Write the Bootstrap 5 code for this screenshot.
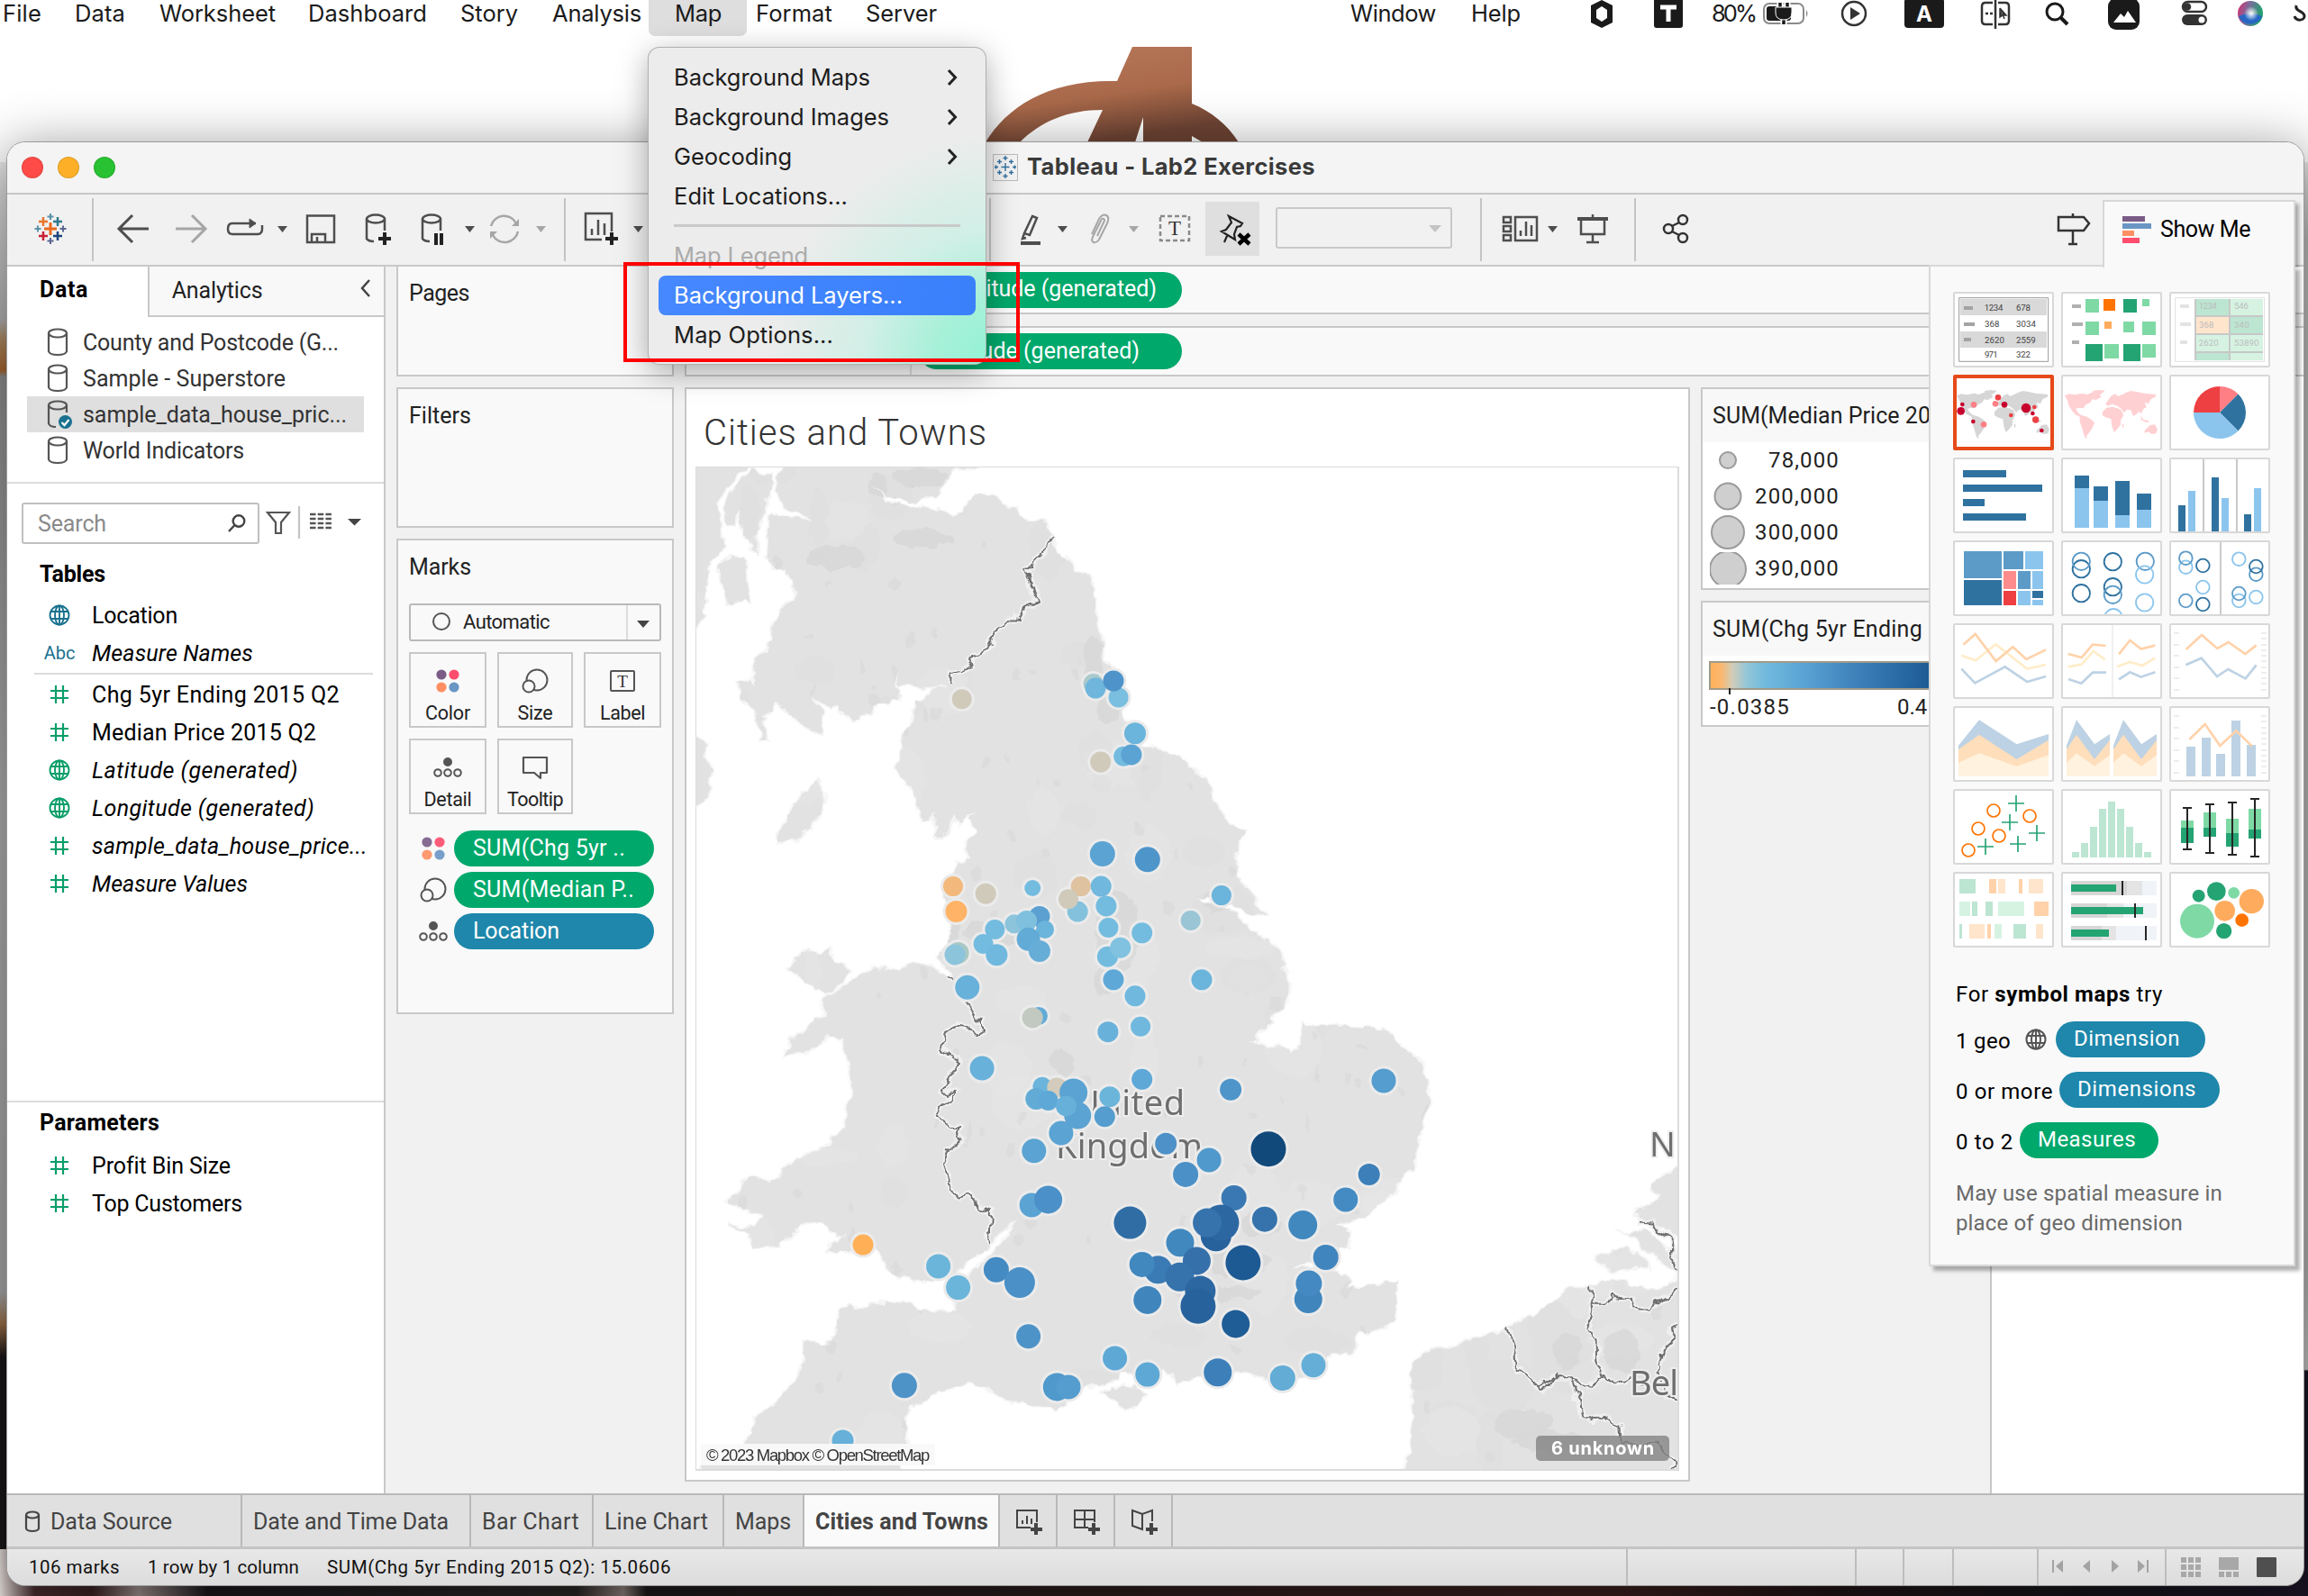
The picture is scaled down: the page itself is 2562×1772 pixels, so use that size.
<!DOCTYPE html>
<html lang="en">
<head>
<meta charset="utf-8">
<title>Tableau - Lab2 Exercises</title>
<link href="https://cdn.jsdelivr.net/npm/bootstrap@5.3.0/dist/css/bootstrap.min.css" rel="stylesheet">
<style>
html,body{margin:0;width:2562px;height:1772px;overflow:hidden}
body{font-family:Roboto,"Noto Sans",sans-serif;font-size:25px;line-height:1;color:#1f1f1f;background:#fff;position:relative}
svg{display:block;flex:none}
[data-w]{white-space:nowrap}
.desk{position:absolute;left:0;top:0}
.defs{position:absolute}
.macbar{height:52px;display:grid;font-family:Inter,sans-serif;font-size:25.5px;line-height:29px;color:#1a1a1a;
 grid-template-columns:3px 80px 94px 165px 169px 102px 107px 109px 10px 122px 538px 134px 132px 135px 101px 561px;position:relative;white-space:nowrap;width:2562px}
.macbar .hot{background:#dedede;height:40px;border-radius:0 0 7px 7px;padding-left:29px}
.macbar .ovf{overflow:visible}
.win{margin:106px 5px 12px 8px;height:1602px;border-radius:20px;overflow:hidden;position:relative;background:#f1f1f1;display:flex;flex-direction:column}
.winshade{position:absolute;left:8px;top:158px;width:2549px;height:1602px;border-radius:20px;box-shadow:0 0 0 1px #9b9b9b,0 12px 60px 6px rgba(0,0,0,.42)}
.ttl{height:58px;border-bottom:2px solid #c6c6c6;background:#f4f4f4;padding-left:16px}
.ttl .lt{width:24px;height:24px;border-radius:50%;margin-right:16px;border:1px solid rgba(0,0,0,.12)}
.lt.r{background:#ff4b47}.lt.y{background:#fdb027}.lt.g{background:#29c232}
.ttl .nm{font-family:Inter,sans-serif;font-weight:700;font-size:25.5px;color:#3a3a3a;margin-left:10px;height:28px}
.ttl .tico{margin-left:958px}
.tools{height:80px;border-bottom:2px solid #c8c8c8}
.main{height:1362px}
.side{width:420px;background:#fff;border-right:2px solid #c8c8c8}
.tabA{width:156px;height:56px;padding:13px 0 0 36px;font-weight:700;color:#000}
.tabB{width:263px;height:56px;background:#f8f8f8;border:2px solid #c8c8c8;border-width:0 0 2px 2px;padding:14px 14px 0 25px}
.srcs{padding-top:8px}
.src{height:40px;margin-left:22px;width:374px;padding-left:22px;color:#333}
.src svg{margin-right:16px}
.src.on{background:#dfdfdf}
.rule2{height:2px;background:#dcdcdc}
.srcrule{margin-top:15px}
.fldrule{margin:1px 12px 1px 30px}
.findrow{margin:21px 0 13px 16px}
.find{height:46px;width:264px;border:2px solid #c0c0c0;border-radius:3px;color:#8a8a8a;padding:0 13px 0 16px}
.fld{height:42px;color:#000}
.fld svg,.fld .abc{width:56px;margin-left:30px;margin-right:8px}
.abc{text-align:center;color:#19718f;font-size:20px}
.hd{font-weight:700;color:#000;padding-left:36px;height:45px;padding-bottom:5px}
.params{height:436px}
.params .hd{height:49px;padding-bottom:4px}
.cards{width:308px;margin-left:12px}
.cd{background:#f9f9f9;border:2px solid #c8c8c8;padding-left:12px;color:#222;margin-bottom:12px}
.cd1{height:122px;border-top:0;padding-top:17px}
.cd2{height:156px;padding-top:17px}
.cd3{height:528px;padding-top:17px;margin-bottom:0}
.cdh{height:53px}
.mk{width:86px;height:84px;border:2px solid #c8c8c8;font-size:21.5px;padding-top:5px}
.mk.n{width:84px}
.mkrow{gap:12px;margin-top:12px}
.auto{height:42px;width:280px;border:2px solid #b9b9b9;border-radius:3px;font-size:22px}
.enc{margin-top:6px}.enc.first{margin-top:18px}
.enc .pl{width:222px;padding-left:21px}
.pl{height:40px;border-radius:20px;background:#00a86b;color:#fff;display:flex;align-items:center;padding-bottom:2px}
.pl.b{background:#1e87ab}
.work{margin-left:12px;width:1797px}
.shelf{background:#f9f9f9;border:2px solid #c8c8c8;border-right:0}
.sh1{height:53px;border-top:0}.sh2{height:56px;margin-top:13px}
.shelf .lab{width:250px;border-right:2px solid #dcdcdc}
.shelf .pl{width:292px;margin-left:8px;padding-left:19px}
.body2{height:1240px}
.view{width:1116px;height:1215px;margin-top:12px;background:#fff;border:2px solid #c8c8c8}
.vt{font-size:40px;font-weight:300;color:#333;padding:29px 0 0 19px;height:86px}
.mapbox{width:1092px;height:1115px;border:1px solid #dcdcdc;border-width:1px 2px 2px 1px;margin-left:10px;position:relative;overflow:hidden}
.attr{position:absolute;left:5px;bottom:4px;width:260px;height:24px;background:rgba(249,249,249,.95);font:18.5px/25px "Liberation Sans",sans-serif;color:#333;padding-left:6px}
.unk{position:absolute;right:9px;bottom:9px;width:148px;height:28px;background:rgba(128,128,128,.78);border-radius:5px;font:700 20px/28px Inter,sans-serif;color:#fff;padding-left:17px}
.legs{width:321px;margin-left:12px;padding-top:12px}
.lg1,.lg2{border:2px solid #c8c8c8;border-right:0;background:#fff;width:300px}
.lg1{height:225px}.lg2{height:140px;margin-top:12px}
.lgh{background:#f8f8f8;height:59px;padding:17px 0 0 11px}
.lrow{height:40px;padding-left:8px}
.lrow .num{width:94px;text-align:right;font-size:24px;margin-left:6px}
.ramp{height:32px;margin:6px 0 0 7px;border:2px solid #a09a88;background:linear-gradient(90deg,#ffb05a 0,#fbb870 12px,#d2ccb9 24px,#93c6d8 40px,#72badd 60px,#5ba5d5 100px,#3c7fb9 165px,#1c5a94 244px,#12497b)}
.ramp svg{overflow:visible}
.rlab{padding:7px 0 0 8px;font-size:24px;gap:119px}
.pane{border-left:2px solid #c8c8c8;background:#fff;width:348px}
.stabs{height:62px;background:#e0e0e0;border-top:2px solid #b9b9b9;border-bottom:3px solid #c4c4c4;display:grid;grid-template-columns:261px 254px 136px 145px 89px 217px 64px 64px 64px;color:#444}
.stabs>div{border-right:2px solid #b9b9b9;display:flex;align-items:center;padding-left:12px;padding-top:1px}
.stabs .cur{background:#fafafa;font-weight:700}
.stabs .add{padding:0}
.stat{height:40px;background:linear-gradient(#e8e8e8,#dcdcdc);display:grid;grid-template-columns:132px 199px 1466px 254px 53px 55px 94px 142px 154px;font-size:20.5px;color:#111}
.stat>div{display:flex;align-items:center}
.stat .t{padding-left:24px}
.stat .l{border-left:2px solid #bdbdbd}
.drop{position:absolute;left:720px;top:53px;width:374px;height:351px;border-radius:12px;padding:11px;background:radial-gradient(circle at 104% 100%,#8ff3d4 0,#a6f0d8 70px,rgba(200,240,228,.75) 150px,rgba(236,236,236,0) 255px),#ececec;box-shadow:0 0 0 1px #b0b0b0,0 8px 34px rgba(0,0,0,.35);font-family:Inter,sans-serif;font-size:25.5px;color:#1c1c1c}
.drop .it{height:44px;padding:0 20px 0 17px;display:flex;align-items:center;justify-content:space-between;border-radius:8px}
.drop .it.sel{background:linear-gradient(90deg,#4688ff,#3a80fb);color:#fff}
.drop .ln{height:3px;background:#c9c9c9;margin:9px 17px 10px}
.drop .dim{color:#ababab}
.redbox{position:absolute;left:692px;top:291px;width:440px;height:111px;border:4px solid #f00}
.showme{position:absolute;left:2141px;top:294px;width:407px;height:1112px;background:#f9f9f9;border:2px solid #d8d8d8;padding:28px 0 0 25px;box-shadow:5px 5px 4px rgba(0,0,0,.3)}
.smtab{position:absolute;left:2334px;top:222px;width:214px;height:75px;background:#f9f9f9;border:2px solid #d8d8d8;border-bottom:0;color:#000;box-shadow:5px 3px 4px -1px rgba(0,0,0,.3);clip-path:inset(0 -10px 0 0)}
.smtab span{margin-bottom:13px}
.thumbs{display:grid;grid-template-columns:112px 112px 112px;gap:8px}
.thumbs svg{width:112px;height:84px;background:#fff;border:2px solid #d8d8d8;border-radius:2px}
.thumbs svg.pick{border:4px solid #e64a19}
.hint{color:#000;font-size:24px;margin-left:3px}
.hint .h0{padding-top:40px;height:76px}
.hint .hl{height:56px;display:flex;align-items:center}
.hint .hl>span{margin-right:7px}
.hint .pl{margin-bottom:5px;padding-left:20px}
.hint .w1{width:166px}.hint .w2{width:178px}.hint .w3{width:154px}
.gry{color:#6a6a6a;line-height:33px;padding-top:13px}
</style>
</head>
<body>
<!-- wallpaper -->
<svg class="desk" width="2562" height="1772">
 <defs>
 <linearGradient id="lft" x1="0" y1="0" x2="0" y2="1"><stop offset="0" stop-color="#fff"/><stop offset=".085" stop-color="#f4f4f4"/><stop offset=".15" stop-color="#cfcfcf"/><stop offset=".2" stop-color="#b5b5b5"/><stop offset=".213" stop-color="#b08b62"/><stop offset=".232" stop-color="#a9672f"/><stop offset=".236" stop-color="#8f8f8f"/><stop offset=".5" stop-color="#b0b0b0"/><stop offset=".81" stop-color="#a9a9a9"/><stop offset=".83" stop-color="#9b6f48"/><stop offset=".85" stop-color="#1b171a"/><stop offset="1" stop-color="#1b171a"/></linearGradient>
 <linearGradient id="rgt" x1="0" y1="0" x2="0" y2="1"><stop offset="0" stop-color="#fff"/><stop offset=".09" stop-color="#f4f4f4"/><stop offset=".15" stop-color="#bdbdbd"/><stop offset=".8" stop-color="#b4b4b4"/><stop offset=".858" stop-color="#c4c4c4"/><stop offset=".859" stop-color="#1b1425"/></linearGradient>
 <linearGradient id="btm"><stop offset="0" stop-color="#e9e2df"/><stop offset=".015" stop-color="#4a2e30"/><stop offset=".04" stop-color="#3a2224"/><stop offset=".06" stop-color="#9d8f8c"/><stop offset=".09" stop-color="#1b181c"/><stop offset=".25" stop-color="#2a2626"/><stop offset=".27" stop-color="#8d807a"/><stop offset=".28" stop-color="#1d1a1b"/><stop offset=".7" stop-color="#3a1f1e"/><stop offset=".79" stop-color="#211416"/><stop offset=".9" stop-color="#15151a"/><stop offset="1" stop-color="#1b1425"/></linearGradient>
 <linearGradient id="wood" x1="0" y1="0" x2=".4" y2="1"><stop offset="0" stop-color="#b97a5c"/><stop offset=".6" stop-color="#a9694a"/><stop offset="1" stop-color="#6e4434"/></linearGradient>
 </defs>
 <rect width="30" height="1772" fill="url(#lft)"/><rect x="2532" width="30" height="1772" fill="url(#rgt)"/><rect x="0" y="1720" width="2562" height="52" fill="url(#btm)"/>
 <rect width="2562" height="180" fill="#fff"/>
 <path fill="url(#wood)" d="M1257 52H1323V115C1345 124 1362 138 1375 158H1335L1323 151V158H1269V130L1260 158H1207L1224 122C1185 122 1155 135 1132 158H1094C1118 118 1165 88 1240 90Z"/>
</svg>
<div class="winshade"></div>

<!-- system menu bar -->
<div class="macbar"><i></i><span data-w="42">File</span><span data-w="55">Data</span><span data-w="128">Worksheet</span><span data-w="131">Dashboard</span><span data-w="63">Story</span><span data-w="98">Analysis</span><div class="hot"><span data-w="51">Map</span></div><i></i><span data-w="84">Format</span><span data-w="78">Server</span><span data-w="94">Window</span><span data-w="54">Help</span>
 <svg width="135" height="40" viewBox="1765 0 135 40"><path fill="#1a1a1a" fill-rule="evenodd" d="M1778 0L1790 6V25L1778 31L1766 25V6ZM1778 7L1784 11V20L1778 24L1772 20V11Z"/><rect x="1836" y="-2" width="32" height="33" rx="3" fill="#1a1a1a"/><path d="M1843 8H1861M1852 8V24" stroke="#fff" stroke-width="5"/></svg>
 <span data-w="47">80%</span>
 <svg class="ovf" width="561" height="40" viewBox="2001 0 561 40"><g fill="none" stroke="#333" stroke-width="2.5">
  <rect x="1958" y="4" width="44" height="22" rx="6" stroke="#8a8a8a" stroke-width="2"/><path d="M2005 11q3 4 0 8z" fill="#8a8a8a" stroke="none"/><rect x="1961" y="7" width="27" height="16" rx="3" fill="#1a1a1a" stroke="none"/><path d="M1976 2V9M1984 2V9M1980 20V27" stroke="#fff" stroke-width="7"/><path d="M1976 3V9M1984 3V9M1980 20V27" stroke="#1a1a1a" stroke-width="3.500"/><path d="M1971 8h18v6q0 8-9 8t-9-8z" fill="#1a1a1a" stroke="#fff" stroke-width="1"/>
  <circle cx="2058" cy="15" r="13"/><path d="M2054 8L2065 15L2054 22Z" fill="#333" stroke="none"/>
  <rect x="2114" y="-2" width="44" height="33" rx="4" fill="#1a1a1a" stroke="none"/>
  <path d="M2212 3H2204q-4 0-4 4V23q0 4 4 4h8M2218 3H2226q4 0 4 4V23q0 4-4 4h-8M2215 -1V32"/><path d="M2204 15h8" stroke-dasharray="3 2"/><path d="M2220 9L2227 17L2223.500 17L2225 21M2220 9V19L2223 17" fill="#333" stroke-width="1.500"/>
  <circle cx="2281" cy="13" r="9" stroke="#1a1a1a" stroke-width="3"/><path d="M2288 20L2295 27" stroke="#1a1a1a" stroke-width="4"/>
  <rect x="2340" y="-2" width="35" height="35" rx="9" fill="#1a1a1a" stroke="none"/><path d="M2346 25L2354 15L2358 19L2362 12L2371 25Z" fill="#fff" stroke="none"/>
  <rect x="2423" y="2" width="26" height="11" rx="5.500"/><circle cx="2428" cy="7.500" r="3" fill="#333"/><rect x="2422" y="16" width="28" height="12" rx="6" fill="#333" stroke="none"/><circle cx="2444" cy="22" r="3.500" fill="#fff" stroke="none"/></g>
  <text x="2136" y="24" text-anchor="middle" font-family="Inter,sans-serif" font-weight="700" font-size="24" fill="#fff">A</text>
  <defs><linearGradient id="siri" x1="0" y1="0" x2="1" y2=".3"><stop offset="0" stop-color="#e0286c"/><stop offset=".45" stop-color="#7c6a9c"/><stop offset="1" stop-color="#20a070"/></linearGradient><radialGradient id="siw"><stop offset="0" stop-color="#fff"/><stop offset="1" stop-color="#fff" stop-opacity="0"/></radialGradient></defs>
  <circle cx="2498" cy="15" r="14" fill="url(#siri)"/><path d="M2485 18a14 14 0 0 0 26 0q-13-6-26 0z" fill="#2767c4"/><circle cx="2499" cy="15" r="8" fill="url(#siw)"/>
  <path d="M2549 6C2547 13 2558 12 2558 18C2558 23 2549 24 2547 18" fill="none" stroke="#222" stroke-width="3"/>
 </svg>
</div>

<div class="win">
 <div class="ttl d-flex align-items-center"><i class="lt r"></i><i class="lt y"></i><i class="lt g"></i>
  <svg class="tico" width="28" height="30" viewBox="0 0 28 30"><rect x=".5" y=".5" width="27" height="29" fill="#f2f2f2" stroke="#bbb"/><path stroke="#2f6f9f" stroke-width="1.400" d="M14 10v9M9.500 14.500h9M14 2v5M11.500 4.500h5M14 22v5M11.500 24.500h5M7.500 6v5M5 8.500h5M20.500 6v5M18 8.500h5M7.500 18v5M5 20.500h5M20.500 18v5M18 20.500h5M3.500 12.500v4M2 14.500h4M24.500 12.500v4M22 14.500h4"/></svg>
  <span class="nm" data-w="319">Tableau - Lab2 Exercises</span></div>

 <div class="tools d-flex">
  <svg width="96" height="78" viewBox="8 216 96 78" stroke-width="2.500"><path stroke="#eb6a1f" stroke-width="3" d="M56 247v14M49 254h14"/><path stroke="#e8762c" d="M48 241v10M43 246h10"/><path stroke="#c72037" d="M48 257v10M43 262h10"/><path stroke="#1f457e" d="M64 257v10M59 262h10"/><path stroke="#2e7a8e" d="M64 241v10M59 246h10"/><path stroke="#5b93a8" stroke-width="2" d="M56 237v7M52.500 240.500h7M42 250.500v7M38.500 254h7"/><path stroke="#5c6692" stroke-width="2" d="M56 264v7M52.500 267.500h7M70 250.500v7M66.500 254h7"/><path stroke="#c4c4c4" stroke-width="2" d="M103 220V290"/></svg>
  <svg width="524" height="78" viewBox="104 216 524 78" fill="none" stroke="#4e4e4e" stroke-width="2.500"><path stroke-width="3" d="M165 254H133M147 239L132 254L147 269"/><path stroke="#a6a6a6" stroke-width="3" d="M195 254H227M213 239L228 254L213 269"/><path d="M284 248H258q-5 0-5 6t5 6h28q5 0 5-6v-4"/><path d="M277 243l7 5-7 5z" fill="#4e4e4e" stroke-width="1"/><path d="M308 251h11l-5.500 7z" fill="#4e4e4e" stroke="none"/><path d="M341 239.500H371V269H341ZM346 269V260H361V269M352 269v-6"/>
   <path d="M407 243v22q2 3 8 3M427 243v13"/><ellipse cx="417" cy="243" rx="10" ry="4.500"/><path stroke="#222" stroke-width="4" d="M427 258v14M420 265h14"/>
   <path d="M469 243v22q2 3 8 3M489 243v13"/><ellipse cx="479" cy="243" rx="10" ry="4.500"/><path stroke="#222" stroke-width="4" d="M484 259v13M490 259v13"/><path d="M516 251h11l-5.500 7z" fill="#4e4e4e" stroke="none"/>
   <g stroke="#a6a6a6"><path d="M545 251a15 15 0 0 1 28-3M575 257a15 15 0 0 1-28 4"/><path d="M576 243v8h-8zM544 265v-8h8z" fill="#a6a6a6" stroke="none"/></g><path d="M595 251h11l-5.500 7z" fill="#a6a6a6" stroke="none"/><path stroke="#c4c4c4" stroke-width="2" d="M627 220V290"/></svg>
  <svg width="472" height="78" viewBox="628 216 472 78" fill="none" stroke="#4e4e4e" stroke-width="2.500"><path d="M668 266H650V237H679V257M657 261v-7M664 261v-17M671 261v-13"/><path stroke="#222" stroke-width="4" d="M679 258v14M672 265h14"/><path d="M703 251h11l-5.500 7z" fill="#4e4e4e" stroke="none"/><path stroke="#c4c4c4" stroke-width="2" d="M1099 220V290"/></svg>
  <svg width="316" height="78" viewBox="1100 216 316 78" fill="none" stroke="#4e4e4e" stroke-width="2.500"><path d="M1146 240l5 2-8 19-6-2zM1137 259l-2 6 4-1"/><path stroke-width="4" d="M1133 270h22"/><path d="M1174 251h11l-5.500 7z" fill="#4e4e4e" stroke="none"/><path stroke="#a6a6a6" d="M1218 262l7-15q2-3 0-4t-3 2l-9 18q-2 5 1 6t6-3l9-18q3-7-1-9t-8 4l-8 17" stroke-width="2"/><path d="M1253 251h11l-5.500 7z" fill="#a6a6a6" stroke="none"/><rect x="1288" y="240" width="32" height="27" stroke="#8a8a8a" stroke-dasharray="5 3"/><text x="1304" y="261" text-anchor="middle" font-family="Liberation Serif,serif" font-size="23" fill="#333" stroke="none">T</text><rect x="1338" y="224" width="60" height="60" fill="#dfdfdf" stroke="none"/><path stroke="#222" stroke-width="2.200" d="M1364 240L1379 248L1377 251L1373 252L1370 260L1371 266L1356 257L1361 255L1367 247ZM1362 262L1359 269"/><path stroke="#000" stroke-width="4.500" d="M1375 260L1387 271M1387 260L1375 271"/></svg>
  <svg width="227" height="78" viewBox="1416 216 227 78" fill="none"><rect x="1417" y="231" width="194" height="44" rx="2" stroke="#c9c9c9" stroke-width="2"/><path d="M1586 250h14l-7 8z" fill="#c4c4c4"/></svg>
  <svg width="174" height="78" viewBox="1643 216 174 78" fill="none" stroke="#4e4e4e" stroke-width="2.500"><path stroke="#c4c4c4" stroke-width="2" d="M1644 220V290M1815 220V290"/><path d="M1669 241h8v6h-8zM1669 251h8v6h-8zM1669 261h8v6h-8zM1682 241h24v26h-24zM1688 262v-6M1694 262v-16M1700 262v-12"/><path d="M1718 251h11l-5.500 7z" fill="#4e4e4e" stroke="none"/><path stroke-width="4" d="M1751 243h34"/><path d="M1755 243v17h26v-17M1768 238v3M1768 260v9M1761 269h14"/></svg>
  <svg width="518" height="78" viewBox="1817 216 518 78" fill="none" stroke="#333" stroke-width="2.500"><circle cx="1852" cy="254" r="5"/><circle cx="1868" cy="244" r="5"/><circle cx="1868" cy="264" r="5"/><path d="M1856 251L1864 247M1856 257L1864 261M2301 237v4M2301 256v15M2296 271h10M2285 241h28l6 7-6 8h-28z"/></svg>
 </div>

 <div class="main d-flex">
  <div class="side d-flex flex-column">
   <div class="d-flex"><div class="tabA"><span data-w="53">Data</span></div><div class="tabB d-flex justify-content-between"><span data-w="100">Analytics</span><svg width="12" height="20" viewBox="0 0 12 20"><path d="M10 1L2 10L10 19" fill="none" stroke="#444" stroke-width="2.500"/></svg></div></div>
   <div class="srcs">
   <div class="src d-flex align-items-center"><svg width="24" height="32" viewBox="0 0 24 32"><use href="#cyl"/></svg><span data-w="283">County and Postcode (G...</span></div>
   <div class="src d-flex align-items-center"><svg width="24" height="32" viewBox="0 0 24 32"><use href="#cyl"/></svg><span data-w="224">Sample - Superstore</span></div>
   <div class="src on d-flex align-items-center"><svg width="24" height="32" viewBox="0 0 24 32" fill="none" stroke="#555" stroke-width="2.200" overflow="visible"><path d="M2 6V26Q3 30 10 30M22 14V6"/><ellipse cx="12" cy="6" rx="10" ry="4.500"/><circle cx="20.500" cy="24.500" r="7.500" fill="#19718f" stroke="none"/><path stroke="#fff" d="M16.500 25l3 3 5-6"/></svg><span data-w="292">sample_data_house_pric...</span></div>
   <div class="src d-flex align-items-center"><svg width="24" height="32" viewBox="0 0 24 32"><use href="#cyl"/></svg><span data-w="178">World Indicators</span></div></div>
   <div class="rule2 srcrule"></div>
   <div class="findrow d-flex align-items-center"><div class="find d-flex align-items-center justify-content-between"><span data-w="75">Search</span><svg width="20" height="20" viewBox="0 0 20 20" fill="none" stroke="#444" stroke-width="2.400"><circle cx="12" cy="7.500" r="6.300"/><path d="M7.500 12L1 19"/></svg></div>
    <svg width="120" height="46" viewBox="288 558 120 46" fill="none" stroke="#555" stroke-width="2.200"><path d="M297 569H321L312 580V592H306V580Z"/><path stroke="#c4c4c4" d="M332 562V598"/><path stroke-width="2.600" stroke-dasharray="6.500 2.200" d="M344 571h25M344 576h25M344 581h25M344 586h25"/><path d="M386 576h15l-7.500 7.500z" fill="#444" stroke="none"/></svg></div>
   <div class="hd d-flex align-items-center"><span data-w="72">Tables</span></div>
   <div class="fld d-flex align-items-center"><svg height="24" viewBox="-28 -12 56 24" fill="none" stroke="#19718f" stroke-width="1.900"><use href="#globe"/></svg><span data-w="94">Location</span></div>
   <div class="fld d-flex align-items-center"><span class="abc">Abc</span><i data-w="178">Measure Names</i></div>
   <div class="rule2 fldrule"></div>
   <div class="fld d-flex align-items-center"><svg height="24" viewBox="-28 -12 56 24" stroke="#0a9e69" stroke-width="2.200"><use href="#hash"/></svg><span data-w="274">Chg 5yr Ending 2015 Q2</span></div>
   <div class="fld d-flex align-items-center"><svg height="24" viewBox="-28 -12 56 24" stroke="#0a9e69" stroke-width="2.200"><use href="#hash"/></svg><span data-w="248">Median Price 2015 Q2</span></div>
   <div class="fld d-flex align-items-center"><svg height="24" viewBox="-28 -12 56 24" fill="none" stroke="#0a9e69" stroke-width="1.900"><use href="#globe"/></svg><i data-w="228">Latitude (generated)</i></div>
   <div class="fld d-flex align-items-center"><svg height="24" viewBox="-28 -12 56 24" fill="none" stroke="#0a9e69" stroke-width="1.900"><use href="#globe"/></svg><i data-w="246">Longitude (generated)</i></div>
   <div class="fld d-flex align-items-center"><svg height="24" viewBox="-28 -12 56 24" stroke="#0a9e69" stroke-width="2.200"><use href="#hash"/></svg><i data-w="305">sample_data_house_price...</i></div>
   <div class="fld d-flex align-items-center"><svg height="24" viewBox="-28 -12 56 24" stroke="#0a9e69" stroke-width="2.200"><use href="#hash"/></svg><i data-w="172">Measure Values</i></div>
   <div class="params mt-auto"><div class="rule2"></div>
    <div class="hd d-flex align-items-center"><span data-w="132">Parameters</span></div>
    <div class="fld d-flex align-items-center"><svg height="24" viewBox="-28 -12 56 24" stroke="#0a9e69" stroke-width="2.200"><use href="#hash"/></svg><span data-w="152">Profit Bin Size</span></div>
    <div class="fld d-flex align-items-center"><svg height="24" viewBox="-28 -12 56 24" stroke="#0a9e69" stroke-width="2.200"><use href="#hash"/></svg><span data-w="166">Top Customers</span></div></div>
  </div>

  <div class="cards">
   <div class="cd cd1"><span data-w="66">Pages</span></div>
   <div class="cd cd2"><span data-w="68">Filters</span></div>
   <div class="cd cd3"><div class="cdh"><span data-w="68">Marks</span></div>
    <div class="auto d-flex align-items-center"><svg width="58" height="38"><circle cx="34" cy="18" r="9" fill="none" stroke="#555" stroke-width="2"/></svg><span data-w="95">Automatic</span><svg class="ms-auto" width="37" height="38"><path d="M1 0V38" stroke="#dcdcdc" stroke-width="2"/><path d="M12 17h14l-7 8z" fill="#444"/></svg></div>
    <div class="mkrow d-flex">
     <div class="mk d-flex flex-column align-items-center"><svg width="50" height="50" viewBox="-25 -25 50 50"><use href="#dots4"/></svg><span data-w="49">Color</span></div>
     <div class="mk n d-flex flex-column align-items-center"><svg width="50" height="50" viewBox="-25 -25 50 50"><use href="#sizes"/></svg><span data-w="38">Size</span></div>
     <div class="mk d-flex flex-column align-items-center"><svg width="50" height="50" viewBox="-25 -25 50 50"><rect x="-13" y="-11" width="26" height="22" rx="1" fill="none" stroke="#555" stroke-width="2"/><text y="7" text-anchor="middle" font-family="Liberation Serif,serif" font-size="19" fill="#333">T</text></svg><span data-w="49">Label</span></div></div>
    <div class="mkrow d-flex">
     <div class="mk d-flex flex-column align-items-center"><svg width="50" height="50" viewBox="-25 -25 50 50"><use href="#det"/></svg><span data-w="52">Detail</span></div>
     <div class="mk n d-flex flex-column align-items-center"><svg width="50" height="50" viewBox="-25 -25 50 50" fill="none" stroke="#555" stroke-width="2.200"><path d="M-13 -11H13V6H6V12L-1 6H-13Z" stroke-linejoin="round"/></svg><span data-w="61">Tooltip</span></div></div>
    <div class="enc first d-flex align-items-center"><svg width="50" height="40" viewBox="-27 -20 50 40" opacity=".9"><use href="#dots4"/></svg><div class="pl"><span data-w="168">SUM(Chg 5yr ..</span></div></div>
    <div class="enc d-flex align-items-center"><svg width="50" height="40" viewBox="-27 -20 50 40"><use href="#sizes"/></svg><div class="pl"><span data-w="178">SUM(Median P..</span></div></div>
    <div class="enc d-flex align-items-center"><svg width="50" height="40" viewBox="-27 -20 50 40"><use href="#det"/></svg><div class="pl b"><span data-w="95">Location</span></div></div>
   </div>
  </div>

  <div class="work">
   <div class="shelf sh1 d-flex align-items-center"><div class="lab h-100"></div><div class="pl"><span data-w="244">Longitude (generated)</span></div></div>
   <div class="shelf sh2 d-flex align-items-center"><div class="lab h-100"></div><div class="pl"><span data-w="225">Latitude (generated)</span></div></div>
   <div class="body2 d-flex">
    <div class="view"><div class="vt"><span data-w="314">Cities and Towns</span></div>
     <div class="mapbox"><svg id="map" width="1090" height="1113" viewBox="773 519 1090 1113">
      <defs>
       <filter id="rough" x="-2%" y="-2%" width="104%" height="104%"><feTurbulence type="fractalNoise" baseFrequency=".06" numOctaves="3" seed="4"/><feDisplacementMap in="SourceGraphic" scale="14" xChannelSelector="R" yChannelSelector="G"/></filter>
       <path id="landN" transform="translate(760 500) scale(.5102 .3827)" d="M225 40H660L630 62 600 50 560 100 555 122 505 150 440 135 405 95 440 150 500 165 550 172 577 188 605 178 620 145 632 127 665 130 690 158 715 170 740 195 770 198 785 220 800 255 820 300 845 345 880 370 893 420 895 490 905 540 912 600 930 640 950 720 955 780 975 830 1000 855 1060 885 1090 905 1130 950 1150 1010 1180 1070 1190 1090 1220 1108 1200 1130 1195 1170 1205 1230 1225 1280 1250 1320 1268 1350 1225 1340 1190 1315 1150 1300 1110 1302 1140 1320 1185 1330 1210 1370 1250 1400 1275 1430 1290 1470 1305 1530 1315 1568H620L590 1530 550 1468 580 1430 575 1380 570 1330 565 1270 590 1230 583 1205 620 1185 612 1140 635 1105 620 1075 635 1050 600 1085 585 1060 575 1095 555 1125 543 1120 545 1045 535 1070 518 1065 505 1035 497 990 470 940 457 912 475 860 475 820 497 780 505 730 540 695 580 685 540 688 470 680 460 640 468 725 420 735 400 770 370 785 345 770 330 740 315 750 285 705 297 770 292 825 250 790 220 745 195 735 170 765 182 845 168 840 160 770 125 720 120 668 140 660 150 680 148 640 165 595 190 550 195 500 215 450 240 440 238 395 222 350 195 335 180 310 185 190 215 195 275 205 262 192 220 165 196 120 200 90ZM15 40H135L88 120 65 150 78 200 85 280 50 330 45 440 25 512 15 512ZM145 50L178 70 190 70 182 130 165 225 148 235 158 300 130 250 118 165 108 220 92 210 88 165 100 130ZM225 48L262 125 245 135 228 80ZM100 305L125 315 133 375 142 440 100 440 85 400 75 340ZM15 825L40 850 62 930 50 998 24 1035 15 1035ZM24 450L45 480 24 512ZM295 965L305 1020 285 1075 240 1130 200 1140 220 1070 255 990Z"/>
       <path id="landS" transform="translate(760 1050) scale(.5102 .3954)" d="M580 -20H1275L1300 40 1315 100 1312 160 1280 200 1235 265 1280 280 1320 300 1340 285 1345 220 1430 225 1518 234 1562 283 1605 332 1617 381 1617 455 1596 534 1581 626 1547 675 1513 730 1479 767 1420 778 1445 790 1445 847 1390 870 1325 915 1400 905 1445 935 1440 960 1550 942 1545 1050 1500 1080 1460 1100 1450 1150 1400 1145 1370 1190 1310 1235 1270 1218 1215 1195 1150 1200 1070 1230 1050 1190 1000 1210 960 1195 905 1240 870 1230 805 1298 735 1275 712 1290 655 1240 620 1232 545 1255 510 1285 495 1290 480 1330 485 1390 470 1480H15L127 1410 127 1400 150 1370 155 1320 195 1290 250 1210 262 1110 300 1115 330 1090 330 1025 400 1010 480 1008 545 1035 595 1020 590 995 610 940 650 890 665 870 700 820 722 770 680 815 655 855 610 880 595 915 545 940 470 935 430 880 415 835 390 865 310 865 315 835 350 820 290 770 250 790 205 840 150 845 145 810 95 785 150 795 170 760 90 720 140 655 190 660 235 605 300 570 350 500 362 410 355 330 345 270 310 250 265 300 215 305 230 265 300 200 305 150 370 100 410 60 440 70 520 45 575 90 600 75 550 35ZM960 1230L1005 1255 985 1290 960 1302 905 1258ZM255 15L315 12 325 50 362 65 340 110 305 140 275 110 228 65Z"/>
       <path id="landE" transform="translate(1450 900) scale(.4975 .4847)" d="M240 1265L270 1240 360 1218 450 1185 520 1145 590 1095 630 1085 680 1075 740 1090 790 1100 850 1050V1530H220L230 1470 240 1390 235 1320ZM650 1025L690 1005 745 1010 770 1050 700 1050 675 1055ZM850 800L770 860 790 890 735 925 770 940 850 985V940L800 925 850 960ZM705 965L760 965 800 1000 850 1030 780 1020 740 985ZM770 1000L850 1045V1075L790 1040Z"/>
       <g id="land"><use href="#landN"/><use href="#landS"/><use href="#landE"/></g>
       <clipPath id="landclip"><use href="#landN"/><use href="#landS"/><use href="#landE"/></clipPath>
      </defs>
      <rect x="772" y="518" width="1100" height="1120" fill="#fff"/>
      <g filter="url(#rough)"><use href="#land" fill="#e2e2e2" stroke="#f5f5f5" stroke-width="9"/><use href="#land" fill="#e2e2e2"/><g id="patches"></g></g>
      <g filter="url(#rough)" fill="none" stroke-linejoin="round"><g id="bord">
       <path d="M1169 598L1163 602 1162 609 1150 621 1145 631 1137 632 1143 646 1148 653 1152 665 1149 672 1137 677 1131 688 1120 687 1107 699 1102 709 1096 721 1080 730 1068 745 1057 746 1056 759M1052 1084l7 2M1073 1113L1081 1133 1092 1134V1145L1084 1150 1080 1142 1065 1139 1050 1145 1045 1165 1053 1172 1065 1180 1057 1188 1048 1210 1050 1217 1061 1210 1058 1221 1038 1230 1041 1240 1056 1251 1066 1251 1061 1262 1066 1265 1053 1275 1048 1291 1053 1313 1066 1330 1075 1326 1089 1341 1099 1345 1098 1366 1099 1381"/>
       <g transform="translate(1450 900) scale(.4975 .4847)"><path vector-effect="non-scaling-stroke" d="M450 1185L465 1240 468 1283 485 1285 520 1320 550 1298 590 1298 610 1350 613 1385 640 1400 665 1390 700 1410 703 1450 780 1450 820 1490 810 1508M633 1085L638 1150 628 1182 648 1215 650 1260 665 1300 630 1320 590 1298M520 1320L530 1328 555 1290M638 1130L665 1130 680 1110 725 1120 730 1140 770 1140 840 1085M665 1300L690 1315 720 1300 760 1310M737 940L775 942 785 965 820 980 818 1010 828 1060M835 1175L812 1190 820 1215 795 1240 785 1290 800 1340 835 1352"/></g></g></g>
      <g font-family="Noto Sans,sans-serif" font-size="38" fill="#6e6e6e" stroke="#eee" stroke-width="4" paint-order="stroke"><text x="1193" y="1238" textLength="122">United</text><text x="1172" y="1286" textLength="163">Kingdom</text><text x="1831" y="1284">N</text><text x="1809" y="1549" textLength="54">Bel</text></g>
      <g id="halo"></g><g id="pts"></g>
     </svg>
     <div class="attr"><span data-w="246">© 2023 Mapbox © OpenStreetMap</span></div><div class="unk"><span data-w="114">6 unknown</span></div></div></div>
    <div class="legs">
     <div class="lg1"><div class="lgh"><span data-w="241">SUM(Median Price 20</span></div>
      <div class="lrow d-flex align-items-center"><svg width="44" height="40"><circle cx="20" cy="20" r="9" fill="#cfcfcf" stroke="#9a9a9a" stroke-width="2"/></svg><div class="num"><span data-w="78">78,000</span></div></div>
      <div class="lrow d-flex align-items-center"><svg width="44" height="40"><circle cx="20" cy="20" r="14.500" fill="#cfcfcf" stroke="#9a9a9a" stroke-width="2"/></svg><div class="num"><span data-w="93">200,000</span></div></div>
      <div class="lrow d-flex align-items-center"><svg width="44" height="40"><circle cx="20" cy="20" r="18" fill="#cfcfcf" stroke="#9a9a9a" stroke-width="2"/></svg><div class="num"><span data-w="93">300,000</span></div></div>
      <div class="lrow d-flex align-items-center"><svg width="44" height="36"><circle cx="20" cy="19" r="20" fill="#cfcfcf" stroke="#9a9a9a" stroke-width="2"/></svg><div class="num"><span data-w="93">390,000</span></div></div></div>
     <div class="lg2"><div class="lgh"><span data-w="232">SUM(Chg 5yr Ending</span></div><div class="ramp"><svg width="40" height="36"><path d="M21 28v7" stroke="#222" stroke-width="2"/></svg></div><div class="rlab d-flex"><span data-w="88">-0.0385</span><span>0.4</span></div></div>
    </div>
    <div class="pane"></div>
   </div>
  </div>
 </div>

 <div class="stabs">
  <div><svg width="36" height="30" viewBox="20 0 36 30" fill="none" stroke="#444" stroke-width="2.200"><path d="M29 8V23q1 3 7 3t7-3V8"/><ellipse cx="36" cy="8" rx="7" ry="3.500"/></svg><span data-w="134">Data Source</span></div><div><span data-w="216">Date and Time Data</span></div><div><span data-w="107">Bar Chart</span></div><div><span data-w="114">Line Chart</span></div><div><span data-w="61">Maps</span></div><div class="cur"><span data-w="191">Cities and Towns</span></div>
  <div class="add"><svg width="62" height="57" viewBox="0 0 62 57" fill="none" stroke="#444" stroke-width="2"><path d="M34 36H19V17H41V30M25 32v-4M30 32v-9M35 32v-6"/><path stroke-width="4" d="M40 31v13M34 38h13"/></svg></div>
  <div class="add"><svg width="62" height="57" viewBox="0 0 62 57" fill="none" stroke="#444" stroke-width="2"><path d="M34 36H19V17H41V30M19 27H41M30 17V36"/><path stroke-width="4" d="M40 31v13M34 38h13"/></svg></div>
  <div class="add"><svg width="62" height="57" viewBox="0 0 62 57" fill="none" stroke="#444" stroke-width="2"><path d="M41 29V17L30 21 19 17V34L30 38V21"/><path stroke-width="4" d="M40 31v13M34 38h13"/></svg></div>
 </div>
 <div class="stat"><div class="t"><span data-w="100">106 marks</span></div><div class="t"><span data-w="167">1 row by 1 column</span></div><div class="t"><span data-w="381">SUM(Chg 5yr Ending 2015 Q2): 15.0606</span></div><div class="l"></div><div class="l"></div><div class="l"></div><div class="l"></div>
  <div class="l"><svg width="140" height="40" viewBox="2263 1720 140 40" fill="#a3a3a3"><path d="M2278 1732h2v14h-2zM2290 1732v14l-8-7zM2320 1732v14l-8-7zM2344 1732v14l8-7zM2373 1732v14l8-7zM2383 1732h2v14h-2z"/></svg></div>
  <div class="l"><svg width="140" height="40" viewBox="2405 1720 140 40" fill="#a8a8a8"><path d="M2421 1729h6v6h-6zM2429 1729h6v6h-6zM2437 1729h6v6h-6zM2421 1737h6v6h-6zM2429 1737h6v6h-6zM2437 1737h6v6h-6zM2421 1745h6v6h-6zM2429 1745h6v6h-6zM2437 1745h6v6h-6zM2463 1729h22v14h-22zM2463 1745h6v6h-6zM2471 1745h6v6h-6zM2479 1745h6v6h-6z"/><rect x="2505" y="1729" width="22" height="22" rx="1" fill="#4f4f4f"/></svg></div></div>
</div>

<!-- Show Me panel -->
<div class="showme">
 <div class="thumbs">
  <svg viewBox="120 78 324 240" font-size="29" fill="#444"><path fill="none" stroke="#999" stroke-width="3" d="M134 92H431V304H134Z"/><path fill="#d9d9d9" d="M138 96h288v54H138zM138 204h288v54H138z"/><path fill="#a3a3a3" d="M150 120h30v12h-30zM150 174h36v12h-36zM150 225h24v12h-24z"/><text x="218" y="134" textLength="62">1234</text><text x="324" y="134" textLength="48">678</text><text x="219" y="188" textLength="49">368</text><text x="324" y="188" textLength="66">3034</text><text x="219" y="242" textLength="66">2620</text><text x="324" y="242" textLength="65">2559</text><text x="219" y="290" textLength="44">971</text><text x="324" y="290" textLength="48">322</text></svg>
  <svg viewBox="480 78 324 240"><path fill="#b0b0b0" d="M510 114h30v12h-30zM510 174h36v12h-36zM510 234h24v12h-24z"/><path fill="#7fd9a5" d="M555 96h45v45h-45zM744 96h24v24h-24zM555 171h45v45h-45zM681 171h36v36h-36zM744 171h45v45h-45zM618 246h48v48h-48zM744 246h45v45h-45z"/><path fill="#ff7300" d="M615 96h39v39h-39z"/><path fill="#ffab5e" d="M618 171h24v24h-24z"/><path fill="#24a373" d="M681 96h45v45h-45zM555 246h57v57h-57zM681 246h57v57h-57z"/></svg>
  <svg viewBox="840 78 324 240" font-size="29" fill="#bdbdbd"><path fill="none" stroke="#e0e0e0" stroke-width="3" d="M854 92H1151V304H854Z"/><path fill="#e3e3e3" d="M870 114h30v12h-30zM870 174h36v12h-36zM870 234h24v12h-24z"/><path fill="#c8c8c8" d="M918 96h228v204H918z"/><path fill="#bce5d2" d="M924 96h108v54H924zM1038 156h108v54h-108zM924 276h108v24H924z"/><path fill="#d6f3e2" d="M1038 96h108v54h-108zM924 216h108v54H924zM1038 216h108v54h-108zM1038 276h108v24h-108z"/><path fill="#ffe5cc" d="M924 156h108v54H924z"/><text x="932" y="130" textLength="60">1234</text><text x="1050" y="130" textLength="48">546</text><text x="933" y="192" textLength="49">368</text><text x="1050" y="192" textLength="50">340</text><text x="932" y="252" textLength="66">2620</text><text x="1050" y="252" textLength="82">53890</text></svg>

  <svg class="pick" viewBox="126 360 312 228"><g transform="translate(-360 0)" fill="#d6d6d6"><use href="#world"/></g><g fill="#c8002d"><circle cx="145" cy="447" r="7"/><circle cx="140" cy="469" r="13"/><circle cx="285" cy="448" r="10"/><circle cx="357" cy="459" r="16"/><circle cx="379" cy="477" r="7"/><circle cx="181" cy="504" r="7"/><circle cx="409" cy="534" r="7"/></g><g fill="#ec4143"><circle cx="264" cy="424" r="10"/><circle cx="385" cy="456" r="7"/><circle cx="307" cy="483" r="7"/><circle cx="389" cy="498" r="11"/></g><g fill="#ff8085"><circle cx="183" cy="448" r="10"/><circle cx="255" cy="445" r="10"/><circle cx="216" cy="514" r="10"/></g></svg>
  <svg viewBox="480 354 324 240" fill="#ffd0d2"><use href="#world"/></svg>
  <svg viewBox="840 354 324 240"><path fill="#ff7f84" d="M1002 474V387A87 87 0 0 1 1063.500 412.500Z"/><path fill="#2f72a0" d="M1002 474L1063.500 412.500A87 87 0 0 1 1063.500 535.500Z"/><path fill="#8bc5ee" d="M1002 474L1063.500 535.500A87 87 0 0 1 915 474Z"/><path fill="#ee3f42" d="M1002 474H915A87 87 0 0 1 1002 387Z"/></svg>

  <svg viewBox="120 630 324 240" fill="#2f72a0"><path d="M147 666h144v24H147zM147 714h264v24H147zM147 762h72v24h-72zM147 810h210v24H147z"/></svg>
  <svg viewBox="480 630 324 240"><path fill="#2f72a0" d="M519 684h48v42h-48zM582 720h48v48h-48zM654 702h48v114h-48zM726 744h48v54h-48z"/><path fill="#8bc5ee" d="M519 726h48v132h-48zM582 768h48v90h-48zM654 816h48v42h-48zM726 798h48v60h-48z"/></svg>
  <svg viewBox="840 630 324 240"><path fill="#c8c8c8" d="M945 630h6v240h-6zM1056 630h6v240h-6z"/><path fill="#2f72a0" d="M864 783h24v90h-24zM975 690h24v180h-24zM1083 813h24v60h-24z"/><path fill="#8bc5ee" d="M897 735h24v135h-24zM1008 759h24v111h-24zM1116 726h24v144h-24z"/></svg>

  <svg viewBox="120 906 324 240"><path fill="#5c9bc8" d="M150 936h126v90H150zM282 936h66v60h-66zM330 1002h42v60h-42z"/><path fill="#2f72a0" d="M150 1032h126v84H150zM378 1068h36v24h-36z"/><path fill="#8bc5ee" d="M354 936h60v60h-60zM378 1002h36v60h-36zM330 1068h42v48h-42zM378 1098h36v18h-36z"/><path fill="#ff8c8c" d="M282 1002h42v60h-42z"/><path fill="#ee3f42" d="M282 1068h42v48h-42z"/></svg>
  <svg viewBox="480 906 324 240" fill="none" stroke-width="5.500"><g stroke="#2f72a0"><circle cx="541" cy="995" r="29"/><circle cx="541" cy="1076" r="29"/><circle cx="646" cy="971" r="29"/><circle cx="646" cy="1055" r="29"/></g><g stroke="#5c9bc8"><circle cx="541" cy="970" r="29"/><circle cx="646" cy="1081" r="29"/><circle cx="754" cy="970" r="29"/></g><g stroke="#8bc5ee"><circle cx="752" cy="1014" r="29"/><circle cx="752" cy="1107" r="29"/><circle cx="648" cy="1157" r="29"/></g></svg>
  <svg viewBox="840 906 324 240" fill="none" stroke-width="5.500"><path stroke="#c8c8c8" d="M1005 906V1146"/><g stroke="#8bc5ee"><circle cx="889" cy="989" r="22"/><circle cx="946" cy="1056" r="22"/><circle cx="1066" cy="962" r="22"/><circle cx="1066" cy="1101" r="22"/><circle cx="1123" cy="1089" r="22"/></g><g stroke="#5c9bc8"><circle cx="889" cy="959" r="22"/><circle cx="889" cy="1101" r="22"/><circle cx="1066" cy="1077" r="22"/><circle cx="1123" cy="1013" r="22"/></g><g stroke="#2f72a0"><circle cx="946" cy="984" r="22"/><circle cx="946" cy="1113" r="22"/><circle cx="1123" cy="987" r="22"/></g></svg>

  <svg viewBox="120 42 324 240" fill="none" stroke-width="8"><path stroke="#ffedc9" d="M142 143L189 160 256 106 361 188 423 174"/><path stroke="#ffd2aa" d="M148 107L188 72 257 162 313 115 358 156 423 124"/><path stroke="#bdd2e4" d="M142 188L187 235 287 181 361 231 423 213"/></svg>
  <svg viewBox="480 42 324 240" fill="none" stroke-width="8"><path stroke="#ededed" stroke-width="5" d="M645 42V282"/><path stroke="#ffd2aa" d="M497 138L542 150 579 107 623 111M666 139L703 93 740 122 787 110"/><path stroke="#ffedc9" d="M497 181L542 173 581 129 620 157M660 181L703 165 744 177 787 152"/><path stroke="#bdd2e4" d="M498 222L541 236 579 200H624M666 223L703 199 740 215 787 199"/></svg>
  <svg viewBox="840 42 324 240" fill="none" stroke-width="8"><use href="#ticks"/><path stroke="#ffd2aa" d="M890 123L942 75 994 120 1031 99 1087 138 1124 109"/><path stroke="#bdd2e4" d="M889 175L941 152 993 213 1030 189 1088 220 1124 175"/></svg>

  <svg viewBox="120 318 324 240"><use href="#area1"/></svg>
  <svg viewBox="480 318 324 240"><g transform="translate(492 0) scale(.48 1) translate(-132 0)"><use href="#area1"/></g><g transform="translate(648 0) scale(.48 1) translate(-132 0)"><use href="#area1"/></g></svg>
  <svg viewBox="840 318 324 240"><use href="#ticks" y="276"/><path fill="#bdd2e4" d="M891 447h30v99h-30zM942 417h30v129h-30zM990 471h30v75h-30zM1041 360h30v186h-30zM1092 441h30v105h-30z"/><path fill="none" stroke="#ffd2aa" stroke-width="8" d="M901 423L953 372 1003 444 1057 394 1110 446"/></svg>

  <svg viewBox="120 594 324 240" fill="none" stroke-width="5"><g stroke="#ff7300"><circle cx="249" cy="660" r="21"/><circle cx="369" cy="678" r="21"/><circle cx="198" cy="720" r="21"/><circle cx="267" cy="744" r="21"/><circle cx="165" cy="792" r="21"/></g><path stroke="#24a373" d="M324 609v54M297 636h54M303 672v54M276 699h54M393 708v54M366 735h54M330 744v54M303 771h54M222 753v54M195 780h54"/></svg>
  <svg viewBox="480 594 324 240" fill="#bce5d2"><path d="M510 798h24v18h-24zM540 768h24v48h-24zM570 714h24v102h-24zM600 654h24v162h-24zM630 630h24v186h-24zM660 654h24v162h-24zM690 714h24v102h-24zM720 768h24v48h-24zM750 798h24v18h-24z"/></svg>
  <svg viewBox="840 594 324 240"><path fill="#7fd9a5" d="M873 693h42v24h-42zM948 666h42v51h-42zM1023 687h42v48h-42zM1098 654h42v69h-42z"/><path fill="#24a373" d="M873 717h42v51h-42zM948 717h42v30h-42zM1023 735h42v45h-42zM1098 723h42v30h-42z"/><path fill="none" stroke="#262626" stroke-width="6" d="M879 651h30M894 651v138M879 789h30M954 639h30M969 639v162M954 801h30M1029 633h30M1044 633v174M1029 807h30M1104 621h30M1119 621v192M1104 813h30"/></svg>

  <svg viewBox="120 870 324 240"><path fill="#bce5d2" d="M135 888h54v48h-54zM177 963h18v48h-18zM222 963h24v48h-24zM135 1038h9v48h-9zM315 1038h42v48h-42z"/><path fill="#d6f3e2" d="M135 963h36v48h-36zM264 963h87v48h-87zM252 1038h24v48h-24z"/><path fill="#ffd2aa" d="M234 888h24v48h-24zM333 888h12v48h-12zM384 963h48v48h-48zM228 1038h12v48h-12z"/><path fill="#ffe5cc" d="M264 888h24v48h-24zM366 888h48v48h-48zM168 1038h51v48h-51zM390 1038h24v48h-24z"/></svg>
  <svg viewBox="480 870 324 240"><path fill="#f0f4f8" d="M507 894h285v48H507zM507 969h285v48H507zM507 1044h285v48H507z"/><path fill="#e4e4e4" d="M507 894h237v48H507zM507 969h174v48H507zM507 1044h150v48H507z"/><path fill="#d6d6d6" d="M507 894h186v48H507zM507 969h120v48H507zM507 1044h102v48H507z"/><path fill="#24a373" d="M507 906h150v24H507zM507 981h240v24H507zM507 1056h126v24H507z"/><path fill="#262626" d="M675 894h6v48h-6zM717 969h6v48h-6zM753 1044h6v48h-6z"/></svg>
  <svg viewBox="840 870 324 240"><g fill="#24a373"><circle cx="932" cy="944" r="21"/><circle cx="991" cy="929" r="31"/><circle cx="1016" cy="1061" r="26"/></g><g fill="#7fd9a5"><circle cx="927" cy="1028" r="57"/><circle cx="1049" cy="934" r="19"/></g><g fill="#ffab5e"><circle cx="1019" cy="994" r="34"/><circle cx="1108" cy="962" r="41"/></g><circle cx="1076" cy="1025" r="22" fill="#ff7300"/></svg>
 </div>
 <div class="hint">
  <div class="h0"><span data-w="229">For <b>symbol maps</b> try</span></div>
  <div class="hl"><span data-w="60">1 geo</span><svg width="43" height="40" viewBox="-21 -18 43 40" fill="none" stroke="#555" stroke-width="2"><use href="#globe"/></svg><div class="pl b w1"><span data-w="117">Dimension</span></div></div>
  <div class="hl"><span data-w="107">0 or more</span><div class="pl b w2"><span data-w="131">Dimensions</span></div></div>
  <div class="hl"><span data-w="63">0 to 2</span><div class="pl w3"><span data-w="108">Measures</span></div></div>
  <div class="gry"><div><span data-w="295">May use spatial measure in</span></div><div><span data-w="251">place of geo dimension</span></div></div>
 </div>
</div>
<div class="smtab d-flex align-items-center"><svg width="62" height="66" viewBox="2336 222 62 66"><path fill="#7a5c87" d="M2356 234h25v6h-25z"/><path fill="#6a96c4" d="M2356 242h32v6h-32z"/><path fill="#ff8f62" d="M2356 250h13v6h-13z"/><path fill="#ff4d6d" d="M2356 258h19v6h-19z"/></svg><span data-w="99">Show Me</span></div>

<!-- open Map menu -->
<div class="drop">
 <div class="it"><span data-w="217">Background Maps</span><svg width="12" height="20"><path d="M2 2L9.500 10L2 18" fill="none" stroke="#222" stroke-width="3"/></svg></div>
 <div class="it"><span data-w="238">Background Images</span><svg width="12" height="20"><path d="M2 2L9.500 10L2 18" fill="none" stroke="#222" stroke-width="3"/></svg></div>
 <div class="it"><span data-w="130">Geocoding</span><svg width="12" height="20"><path d="M2 2L9.500 10L2 18" fill="none" stroke="#222" stroke-width="3"/></svg></div>
 <div class="it"><span data-w="192">Edit Locations...</span></div>
 <div class="ln"></div>
 <div class="it dim"><span data-w="148">Map Legend</span></div>
 <div class="it sel"><span data-w="253">Background Layers...</span></div>
 <div class="it"><span data-w="176">Map Options...</span></div>
</div>
<div class="redbox"></div>

<!-- shared icon shapes -->
<svg class="defs" width="0" height="0"><defs>
 <g id="cyl" fill="none" stroke="#555" stroke-width="2.200"><path d="M2 6V26Q3 30 12 30T22 26V6"/><ellipse cx="12" cy="6" rx="10" ry="4.500"/></g>
 <g id="globe"><circle r="10.500"/><ellipse rx="5" ry="10.500"/><path d="M0 -10.500V10.500M-9.500 -4H9.500M-9.500 4H9.500"/></g>
 <path id="hash" d="M-4 -10V10M4 -10V10M-10 -4H10M-10 4H10"/>
 <g id="dots4"><circle cx="-7" cy="-7" r="5.600" fill="#7a5c87"/><circle cx="7" cy="-7" r="5.600" fill="#ff4d6d"/><circle cx="-7" cy="7" r="5.600" fill="#ff8f62"/><circle cx="7" cy="7" r="5.600" fill="#6a96c4"/></g>
 <g id="sizes" fill="#f9f9f9" stroke="#555" stroke-width="2"><circle cx="2" cy="-1" r="11.500"/><circle cx="-7" cy="6" r="6.500"/></g>
 <g id="det" fill="none" stroke="#555" stroke-width="2"><circle cy="-6" r="4" fill="#555"/><circle cx="-11" cy="6" r="3.800"/><circle cy="6" r="3.800"/><circle cx="11" cy="6" r="3.800"/></g>
 <path id="ticks" stroke="#ededed" stroke-width="6" d="M849 69h18M849 108h18M849 144h18M849 183h18M849 219h18M849 258h18M1140 69h18M1140 87h18M1140 108h18M1140 126h18M1140 144h18M1140 162h18M1140 183h18M1140 201h18M1140 219h18M1140 237h18M1140 258h18"/>
 <g id="area1"><path fill="#bdd2e4" d="M132 443L201 358 326 439 432 405V546H132Z"/><path fill="#ffdebb" d="M132 456L201 407 326 489 432 425V546H132Z"/><path fill="#fff2de" d="M132 500L201 469 326 512 432 475V546H132Z"/></g>
 <path id="world" d="M486 418L500 412 520 415 545 410 560 414 575 408 600 400 612 402 600 412 608 422 590 432 578 430 570 442 556 448 548 460 535 458 522 462 530 474 540 482 560 488 575 498 585 508 578 525 568 540 558 552 560 562 552 556 545 530 536 505 536 488 520 480 508 465 498 448 496 436ZM578 402L600 399 620 401 608 412 592 418 584 410ZM612 472L625 458 645 455 662 460 674 466 682 482 672 500 672 515 660 530 650 540 643 520 640 496 622 490 612 484ZM676 515L683 512 680 528ZM622 446L632 430 642 418 655 412 664 420 690 408 705 402 725 405 750 410 790 414 788 422 772 430 765 445 752 440 758 456 748 462 740 478 732 470 725 480 714 486 706 466 694 464 684 474 672 460 660 452 645 446 628 452ZM738 484L748 498 768 502 760 508 742 500ZM752 534L770 516 786 514 795 530 790 544 775 546 765 538 752 542Z"/>
</defs></svg>

<script>
// Towns: x, y, radius, colour. Upper and lower sheets use their own grid.
const north=`889 677 11 a9c9cd|894 690 11.5 6fb6dc|944 717 11 7bbfe0|933 669 11.5 4e93ca|980 821 12 6bb4db|955 888 11 74bcdf|972 883 11.5 5ba3d2|905 904 11.5 d0cabb|603 722 11 d0cabb|909 1171 14 5ba3d2|1007 1187 14 4e95ca|584 1265 11 f3b97c|591 1338 12 ffb366|655 1286 11.5 d0cabb|757 1270 9 74bcdf|862 1265 11 dfc2a0|855 1338 11.5 84c1dc|835 1302 11 d0cabb|906 1265 11.5 70b8de|917 1322 11.5 74bcdf|1168 1291 11 6bb4db|1101 1364 11 99c5d4|772 1352 11.5 5ba0d1|784 1390 10 6bb4db|717 1374 10.5 8cc4dc|744 1365 11.5 7fc0df|675 1390 11 74bcdf|748 1418 13 62abd7|772 1453 12 66add8|650 1432 11 74bcdf|679 1464 12 70b8de|595 1458 12 aac8c4|588 1463 11.5 8cc4dc|922 1385 11 74bcdf|995 1400 11.5 74bcdf|920 1469 11.5 74bcdf|948 1443 11.5 80c2df|933 1536 11.5 5ea8d8|1125 1536 11.5 6bb4db`;
const south=`615 117 13.5 68b1da|980 141 11.5 70b8de|770 197 10 62abd7|757 202 11.5 c2c9c0|921 242 11.5 68b1da|992 227 11 70b8de|647 344 13.5 68b1da|995 375 11.5 5ea8d8|1188 404 12 4e95ca|1521 379 13.5 559dce|778 395 10.5 6bb4db|810 398 11 d3cbbb|765 430 12 62abd7|791 435 11 5ea8d8|846 412 15.5 5ba3d2|855 477 15 5ba3d2|830 450 11.5 66b0d9|925 424 11.5 6bb5da|914 480 11.5 559dce|819 526 13.5 5ba3d2|760 576 13.5 5ba3d2|1047 556 12 4e90c8|1141 602 13.5 5099cc|1090 642 14 4b90c6|1270 571 19.5 12497b|1489 642 12 3c7fb9|1438 713 13.5 448bc3|755 728 13.5 5ba3d2|791 713 15.5 4b90c8|1195 708 14 3a78b3|969 778 18 306da5|1262 768 14 3673ad|1345 784 16 4188bf|1156 815 17 28629c|1167 778 20 2c67a2|1137 778 16 3673ad|1078 834 15.5 4188bf|1215 890 19.5 1d5a94|1395 875 14 4085bd|1114 885 15.5 3570aa|1030 910 15.5 3a7ab5|995 895 14 4188bf|1077 930 16 3673ad|1007 995 15.5 4086bd|1122 970 17 2c67a2|1117 1012 19.5 28629c|1357 993 15.5 4086bd|1358 948 14.5 4489c2|1199 1062 15.5 1f5d96|388 840 11.5 ffb057|552 900 13.5 6bb5da|595 960 13.5 6bb5da|678 910 14 448bc3|729 946 17 4b90c6|748 1097 13.5 4e93c8|936 1158 13.5 5ea8d6|1007 1204 13.5 5ea8d6|1160 1198 15.5 3c7fb9|1301 1214 14 62acd6|1368 1178 13.5 64aed8|810 1239 15.5 5099cc|835 1239 13.5 559dce|478 1235 14 4e93c8|344 1390 12 66b0d9`;
let halo='',pts='';
function plot(list,y0,sy){list.split('|').forEach(t=>{const [x,y,r,c]=t.split(' ');const p=`cx="${(760+x/1.96).toFixed(1)}" cy="${(y0+y/sy).toFixed(1)}"`;
 halo+=`<circle ${p} r="${+r+3}" fill="#ebebeb"/>`;pts+=`<circle ${p} r="${r}" fill="#${c}"/>`;});}
plot(north,500,2.613);plot(south,1050,2.529);
document.getElementById('halo').innerHTML=halo;document.getElementById('pts').innerHTML=pts;
// terrain shading
let s=7;const rnd=()=>(s=(s*16807)%2147483647)/2147483647;let g='';
for(let i=0;i<380;i++){const big=i<140;const x=773+rnd()*1090,y=519+rnd()*1113,a=(big?10+rnd()*30:2+rnd()*5),b=(big?10+rnd()*30:3+rnd()*7);
 g+=`<ellipse cx="${x|0}" cy="${y|0}" rx="${a|0}" ry="${b|0}" fill="${big?(i%2?'#e5e5e5':'#dfdfdf'):'#d9d9d9'}" opacity="${big?.7:.6}"/>`;}
[[930,618,34,14],[1025,597,34,10],[1020,530,30,10],[975,540,10,14],[1214,730,9,26],[1230,790,12,14],[1050,1035,14,20],[1110,1035,40,14],[1240,1035,24,46],[1230,1090,18,14],[1350,1000,14,12],[1370,1400,44,16],[1400,1360,22,14],[1350,1435,50,9],[1180,1180,14,12],[1690,1580,34,16],[1740,1500,14,22],[1800,1500,20,24],[1720,1600,40,12]].forEach(b=>g+=`<ellipse cx="${b[0]}" cy="${b[1]}" rx="${b[2]}" ry="${b[3]}" fill="#d7d7d7" opacity=".8"/>`);
document.getElementById('patches').innerHTML=`<g clip-path="url(#landclip)">${g}</g>`;
// border lines: pale casing under a thin dark line
const bd=document.getElementById('bord'),cas=bd.cloneNode(true);cas.removeAttribute('id');cas.setAttribute('stroke','#f0f0f0');cas.setAttribute('stroke-width','7');bd.parentNode.insertBefore(cas,bd);bd.setAttribute('stroke','#6e6e6e');bd.setAttribute('stroke-width','2');
document.querySelectorAll('[data-w]').forEach(e=>{e.style.display='inline-block';e.style.width='max-content';const w=e.getBoundingClientRect().width;e.style.letterSpacing=((e.dataset.w-w+1)/e.textContent.length).toFixed(3)+'px';});
</script>
<script src="https://cdn.jsdelivr.net/npm/bootstrap@5.3.0/dist/js/bootstrap.bundle.min.js"></script>
</body>
</html>
